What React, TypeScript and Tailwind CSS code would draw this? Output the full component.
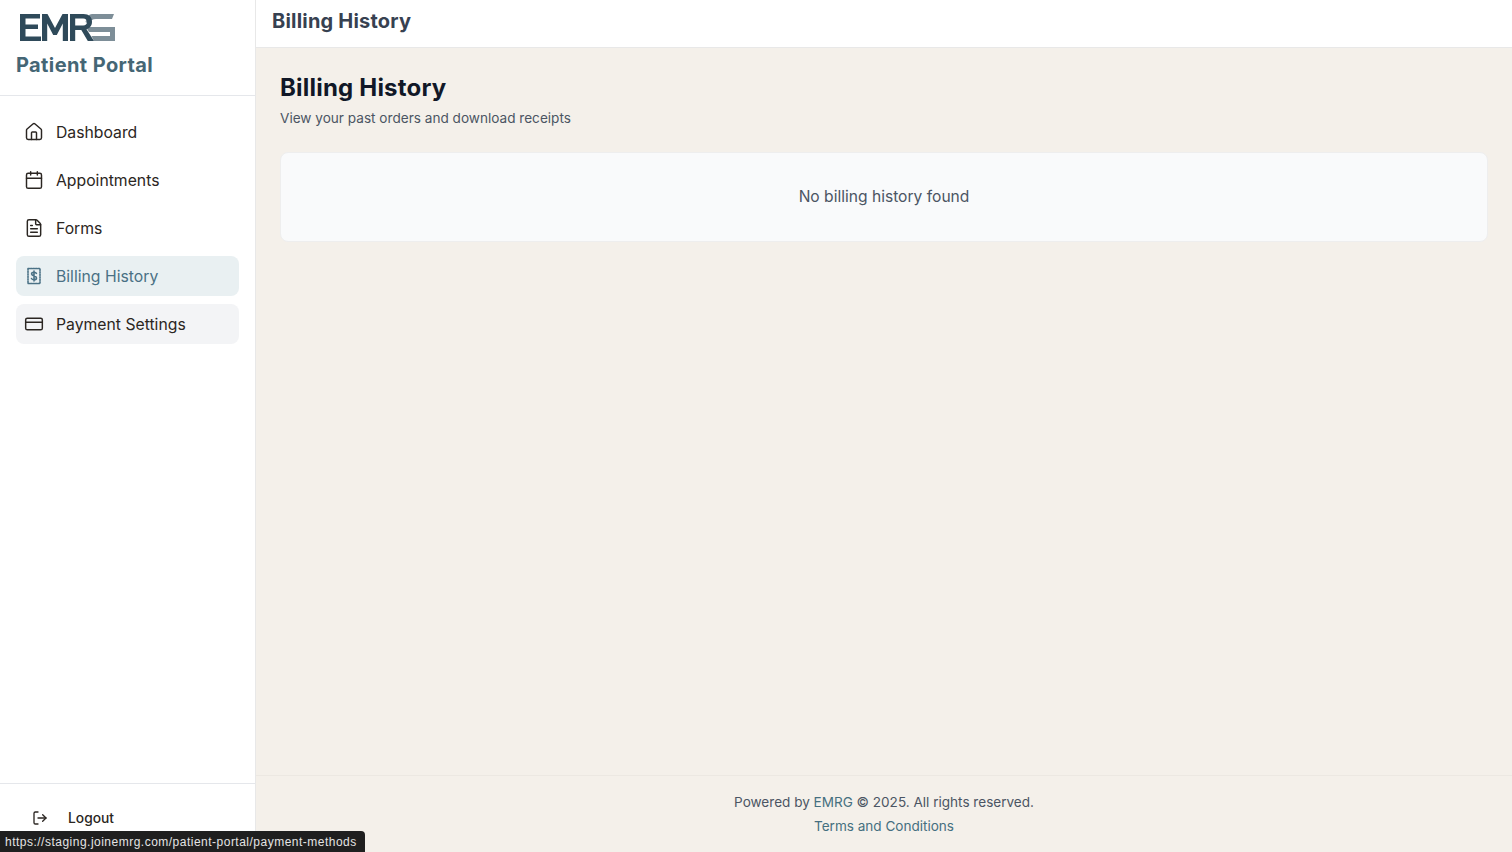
import { House, Calendar, FileText, CreditCard, LogOut } from "lucide-react";

const font = "[font-family:Inter,'Liberation_Sans',sans-serif]";

function Logo() {
  return (
    <svg width="96" height="28" viewBox="0 0 96 28" className="block">
      <g fill="#7d8e98">
        <path d="M72 1h22l-2 5H76c-3.500 0-6 1.800-7.500 5l-3-2C67 4 69 1 72 1z" />
        <path d="M66 14h29v14H74l-2.500-5H90v-4H69z" />
      </g>
      <g fill="#2f4a5a">
        <path d="M0 1h20v4.500H5.500v6H18v4.500H5.500v7.500H21V28H0z" />
        <path d="M22 28V1h5.500l7.500 14 7.500-14H48v27h-5.200V10.500L36.800 22h-3.600L27.200 10.500V28z" />
        <path d="M50 1h13.500c5.500 0 8.500 3 8.500 7.800 0 4-2.200 6.500-5.500 7.400L74 28h-6.200l-6.500-11H55.200v11H50zM55.200 5.500v7h8c2.400 0 3.800-1.300 3.800-3.500s-1.400-3.500-3.800-3.500z" />
      </g>
    </svg>
  );
}

function BillingIcon() {
  return (
    <svg width="20" height="20" viewBox="0 0 20 20" fill="none" stroke="currentColor" strokeWidth="1.600" strokeLinecap="round" strokeLinejoin="round">
      <path d="M4 2.500h12v15H4z" strokeDasharray="1.500 1" />
      <path d="M12.400 7.400c-.4-.8-1.300-1.200-2.400-1.200-1.400 0-2.400.7-2.400 1.800 0 2.500 4.900 1.300 4.900 3.900 0 1.100-1 1.900-2.500 1.900-1.200 0-2.100-.5-2.500-1.300M10 5v10" />
    </svg>
  );
}

const items = [
  { label: "Dashboard", icon: <House size={20} strokeWidth={1.75} />, cls: "text-[#2b2622]" },
  { label: "Appointments", icon: <Calendar size={20} strokeWidth={1.75} />, cls: "text-[#2b2622]" },
  { label: "Forms", icon: <FileText size={20} strokeWidth={1.75} />, cls: "text-[#2b2622]" },
  { label: "Billing History", icon: <BillingIcon />, cls: "text-[#4a7185] bg-[#e9f0f2]" },
  { label: "Payment Settings", icon: <CreditCard size={20} strokeWidth={1.75} />, cls: "text-[#2b2622] bg-[#f3f4f6]" },
];

export default function App() {
  return (
    <div className={`${font} relative flex h-screen w-full overflow-hidden bg-[#f4f0ea]`}>
      <aside className="flex h-full w-[256px] shrink-0 flex-col border-r border-[#e8e8e8] bg-white">
        <div className="h-[96px] shrink-0 border-b border-[#e5e7eb] pl-4 pt-[13px]">
          <div className="pl-1">
            <Logo />
          </div>
          <div className="mt-[10px] text-[20px] leading-[28px] font-bold tracking-[0.4px] text-[#456675]">Patient Portal</div>
        </div>
        <nav className="flex flex-1 flex-col gap-2 px-4 pt-4">
          {items.map((it) => (
            <div key={it.label} className={`flex h-10 items-center gap-3 rounded-lg px-2 text-[15.75px] ${it.cls}`}>
              <span className="flex w-5 shrink-0 justify-center">{it.icon}</span>
              <span className="pt-px">{it.label}</span>
            </div>
          ))}
        </nav>
        <div className="flex h-[69px] shrink-0 items-start gap-5 border-t border-[#e5e7eb] pl-8 pt-6 text-[13.8px] font-medium text-[#2b2622]">
          <LogOut size={16} strokeWidth={2} className="mt-[2px]" />
          <span>Logout</span>
        </div>
      </aside>
      <div className="flex min-w-0 flex-1 flex-col">
        <header className="flex h-[48px] shrink-0 items-center border-b border-[#e8e8e8] bg-white px-4 pb-1.5">
          <h2 className="text-[20px] leading-7 font-bold tracking-[0.2px] text-[#374151]">Billing History</h2>
        </header>
        <main className="flex-1 px-6 pt-6">
          <h1 className="text-2xl leading-8 font-bold tracking-[0.2px] text-[#111827]">Billing History</h1>
          <p className="mt-1 text-[13.6px] leading-5 text-[#4b5563]">View your past orders and download receipts</p>
          <div className="mt-6 flex h-[90px] items-center justify-center rounded-lg border border-[#eeeeee] bg-[#f9fafb] text-[15.6px] text-[#4b5563]">
            No billing history found
          </div>
        </main>
        <footer className="h-[77px] shrink-0 border-t border-[#ece8e2] pt-3.5 text-center text-[13.55px] leading-6 text-[#4b5563]">
          <div>
            Powered by <span className="text-[#456f80]">EMRG</span> © 2025. All rights reserved.
          </div>
          <div className="text-[#456f80]">Terms and Conditions</div>
        </footer>
      </div>
      <div className="absolute bottom-0 left-0 flex h-[21px] items-center rounded-tr-[4px] bg-[#1f1f1f] pl-[5px] pr-2 text-xs tracking-[0.49px] text-[#e4e4e4] [font-family:'Liberation_Sans',sans-serif]">
        https://staging.joinemrg.com/patient-portal/payment-methods
      </div>
    </div>
  );
}
